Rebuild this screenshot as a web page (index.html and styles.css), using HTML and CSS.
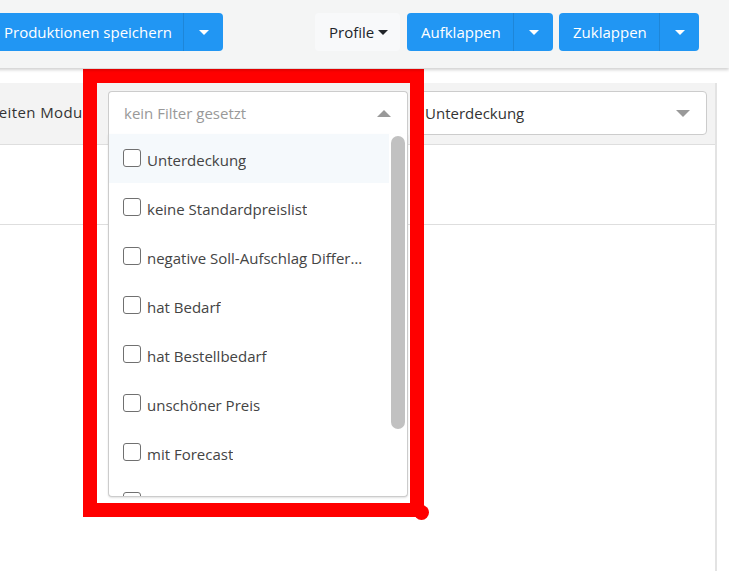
FILE: index.html
```html
<!DOCTYPE html>
<html lang="de">
<head>
  <meta charset="UTF-8" />
  <meta name="viewport" content="width=device-width, initial-scale=1.0" />
  <title>Produktionsplanung</title>
  <link rel="stylesheet" href="styles.css">
</head>
<body>
  <div class="app">
    <!-- Werkzeugleiste oben -->
    <header class="toolbar">
      <div class="btn-group btn-save">
        <button class="btn btn-primary">Produktionen speichern</button>
        <button class="btn btn-primary btn-caret"><span class="caret"></span></button>
      </div>
      <div class="toolbar-right">
        <button class="btn btn-light">Profile <span class="caret caret-dark"></span></button>
        <div class="btn-group btn-open">
          <button class="btn btn-primary">Aufklappen</button>
          <button class="btn btn-primary btn-caret"><span class="caret"></span></button>
        </div>
        <div class="btn-group btn-close">
          <button class="btn btn-primary">Zuklappen</button>
          <button class="btn btn-primary btn-caret"><span class="caret"></span></button>
        </div>
      </div>
    </header>

    <!-- Tabelle mit Filterzeile -->
    <main class="panel">
      <div class="filter-row">
        <label class="mode-label">Bearbeiten Modus</label>
        <div class="select select-open">
          <div class="select-head">
            <span class="placeholder">kein Filter gesetzt</span>
            <span class="arrow arrow-up"></span>
          </div>
          <div class="select-menu">
            <ul class="options">
              <li class="active"><span class="check"></span><span class="label-text">Unterdeckung</span></li>
              <li><span class="check"></span><span class="label-text">keine Standardpreislist</span></li>
              <li><span class="check"></span><span class="label-text">negative Soll-Aufschlag Differenz</span></li>
              <li><span class="check"></span><span class="label-text">hat Bedarf</span></li>
              <li><span class="check"></span><span class="label-text">hat Bestellbedarf</span></li>
              <li><span class="check"></span><span class="label-text">unschöner Preis</span></li>
              <li><span class="check"></span><span class="label-text">mit Forecast</span></li>
              <li><span class="check"></span><span class="label-text">ohne Lagerbestand</span></li>
              <li><span class="check"></span><span class="label-text">gesperrt</span></li>
            </ul>
            <div class="scroll-thumb"></div>
          </div>
        </div>
        <div class="select select-value">
          <div class="select-head">
            <span class="value">Unterdeckung</span>
            <span class="arrow arrow-down"></span>
          </div>
        </div>
      </div>
      <div class="table-row"></div>
    </main>
  </div>

  <!-- Markierung -->
  <div class="marker"></div>
</body>
</html>
```

FILE: styles.css
```css
/* --- Reset und Grundlayout --- */
* {
  margin: 0;
  padding: 0;
  box-sizing: border-box;
}
html,
body {
  height: 100%;
  overflow: hidden;
  background: #ffffff;
  font-family: "Open Sans", "Noto Sans", sans-serif;
  font-size: 15px;
  color: #333;
}

/* Seite ist leicht nach rechts gescrollt */
.app {
  margin-left: -60px;
  width: 789px;
  height: 100%;
  display: flex;
  flex-direction: column;
}

/* --- Werkzeugleiste --- */
.toolbar {
  height: 68px;
  flex-shrink: 0;
  background: #f4f5f5;
  box-shadow: 0 2px 3px rgba(0, 0, 0, 0.18);
  display: flex;
  align-items: flex-start;
  justify-content: space-between;
  padding: 13px 30px 0 46px;
  position: relative;
  z-index: 1;
}
.toolbar-right {
  display: flex;
  gap: 6px;
}

.btn {
  height: 38px;
  border: none;
  border-radius: 4px;
  font-family: inherit;
  font-size: 15px;
  padding: 0 12px;
  white-space: nowrap;
  cursor: pointer;
  display: flex;
  align-items: center;
}
.btn-primary {
  background-color: #2196f3;
  color: #ffffff;
}
.btn-light {
  background-color: #f8f9fa;
  color: #212529;
  padding: 0 13px 0 14px;
  margin-right: 1px;
  width: 85px;
}

.btn-group {
  display: flex;
}
.btn-group .btn:first-child {
  border-radius: 4px 0 0 4px;
}
.btn-group .btn-caret {
  width: 40px;
  justify-content: center;
  border-left: 1px solid #1e86d8;
  border-radius: 0 4px 4px 0;
}
.btn-save .btn:first-child {
  width: 197px;
  padding: 0 0 0 18px;
}
.btn-open .btn:first-child {
  width: 106px;
  padding-left: 14px;
}
.btn-close .btn:first-child {
  width: 100px;
  padding-left: 14px;
}

.caret {
  display: inline-block;
  width: 0;
  height: 0;
  border-left: 5px solid transparent;
  border-right: 5px solid transparent;
  border-top: 5px solid #ffffff;
}
.caret-dark {
  border-top-color: #212529;
  margin-left: 4px;
}

/* --- Tabelle --- */
.panel {
  flex: 1;
  margin-top: 15px;
  width: 777px;
  border-right: 2px solid #e3e3e3;
}

.filter-row {
  height: 62px;
  background: #f3f3f3;
  border-bottom: 1px solid #dedede;
  display: flex;
  align-items: flex-start;
  padding: 8px 8px 0 15px;
  gap: 6px;
}
.mode-label {
  flex: 0 0 147px;
  margin-top: 11px;
  font-size: 15px;
  letter-spacing: 0.4px;
  color: #333;
}

.table-row {
  height: 80px;
  border-bottom: 1px solid #dedede;
}

/* --- Auswahlfelder --- */
.select {
  position: relative;
  height: 44px;
}
.select-open {
  flex: 0 0 300px;
}
.select-value {
  flex: 1;
}
.select-head {
  height: 44px;
  background: #ffffff;
  border: 1px solid #cccccc;
  border-radius: 4px;
  display: flex;
  align-items: center;
  justify-content: space-between;
  padding: 0 16px 0 15px;
}
.select-open .select-head {
  border-radius: 4px 4px 0 0;
  border-bottom-color: #e4e4e4;
}
.select-value .select-head {
  padding-left: 10px;
}
.placeholder {
  color: #999999;
}
.value {
  color: #333;
}

.arrow {
  width: 0;
  height: 0;
  border-left: 7px solid transparent;
  border-right: 7px solid transparent;
}
.arrow-up {
  border-bottom: 7px solid #999999;
}
.arrow-down {
  border-top: 7px solid #999999;
}

/* --- Aufgeklappte Liste --- */
.select-menu {
  position: absolute;
  top: 43px;
  left: 0;
  width: 300px;
  height: 363px;
  overflow: hidden;
  background: #ffffff;
  border: 1px solid #cccccc;
  border-top: none;
  border-radius: 0 0 4px 4px;
  box-shadow: 0 1px 2px rgba(0, 0, 0, 0.12);
}
.options {
  list-style: none;
  padding-right: 18px;
}
.options li {
  height: 49px;
  display: flex;
  align-items: center;
  padding-left: 14px;
  color: #444;
  white-space: nowrap;
}
.options li.active {
  background: #f5f9fc;
}
.label-text {
  overflow: hidden;
  text-overflow: ellipsis;
  max-width: 222px;
  margin-top: 3px;
}
.check {
  flex-shrink: 0;
  width: 18px;
  height: 18px;
  border: 1px solid #707070;
  border-radius: 3px;
  margin: 0 6px 2px 0;
  background: #ffffff;
}

/* Scrollbalken der Liste */
.scroll-thumb {
  position: absolute;
  top: 2px;
  right: 2px;
  width: 14px;
  height: 293px;
  border-radius: 7px;
  background: #c1c1c1;
}

/* --- Rote Markierung --- */
.marker {
  position: absolute;
  left: 83px;
  top: 69px;
  width: 341px;
  height: 448px;
  border: 14px solid #ff0000;
}
.marker::after {
  content: "";
  position: absolute;
  right: -19px;
  bottom: -17px;
  width: 15px;
  height: 15px;
  border-radius: 50%;
  background: #ff0000;
}
```
